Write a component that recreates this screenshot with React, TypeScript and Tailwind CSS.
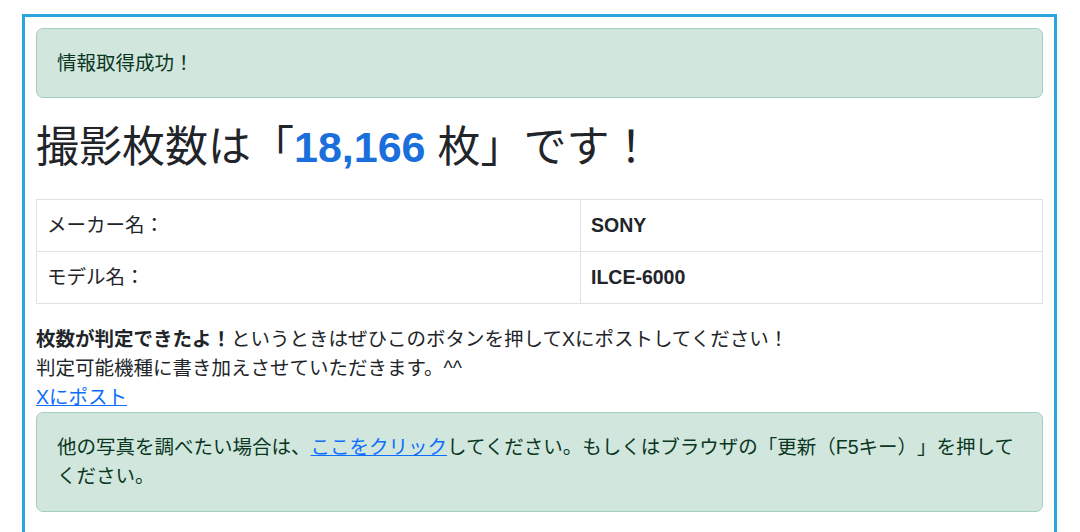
import React from "react";

const font = "font-['Liberation_Sans','Noto_Sans_CJK_JP',sans-serif] [text-spacing-trim:space-all]";

export default function App() {
  return (
    <div className={`${font} min-h-[532px] bg-white pl-[22px] pt-[14px] text-[#212529] text-[19.5px] leading-[29px]`}>
      <div className="w-[1035px] min-h-[600px] border-[3px] border-[#29a6de] px-[11px] pt-[11px]">
        <div className="rounded-[7px] border border-[#a3cfbb] bg-[#d1e7dd] px-[20px] py-[19.5px] text-[#0a3622]">
          情報取得成功！
        </div>
        <h1 className="mt-[23px] text-[43px] leading-[52px] font-normal">
          撮影枚数は「<span className="font-bold text-[#1a6fdc]">18,166</span> 枚」です！
        </h1>
        <table className="mt-[26px] w-full border-collapse border border-[#dee2e6]">
          <tbody>
            <tr className="border-b border-[#dee2e6]">
              <td className="w-[544px] border-r border-[#dee2e6] px-[10px] py-[11px]">メーカー名：</td>
              <td className="px-[10px] py-[11px] font-bold">SONY</td>
            </tr>
            <tr>
              <td className="w-[544px] border-r border-[#dee2e6] px-[10px] py-[11px]">モデル名：</td>
              <td className="px-[10px] py-[11px] font-bold">ILCE-6000</td>
            </tr>
          </tbody>
        </table>
        <p className="mt-[21px]">
          <b>枚数が判定できたよ！</b>というときはぜひこのボタンを押してXにポストしてください！
          <br />
          判定可能機種に書き加えさせていただきます。^^
          <br />
          <a href="#" className="text-[#0d6efd] underline">Xにポスト</a>
        </p>
        <div className="mt-0 rounded-[7px] border border-[#a3cfbb] bg-[#d1e7dd] px-[20px] py-[20px] text-[#0a3622]">
          他の写真を調べたい場合は、<a href="#" className="text-[#0d6efd] underline">ここをクリック</a>してください。もしくはブラウザの「更新（F5キー）」を押してください。
        </div>
      </div>
    </div>
  );
}
